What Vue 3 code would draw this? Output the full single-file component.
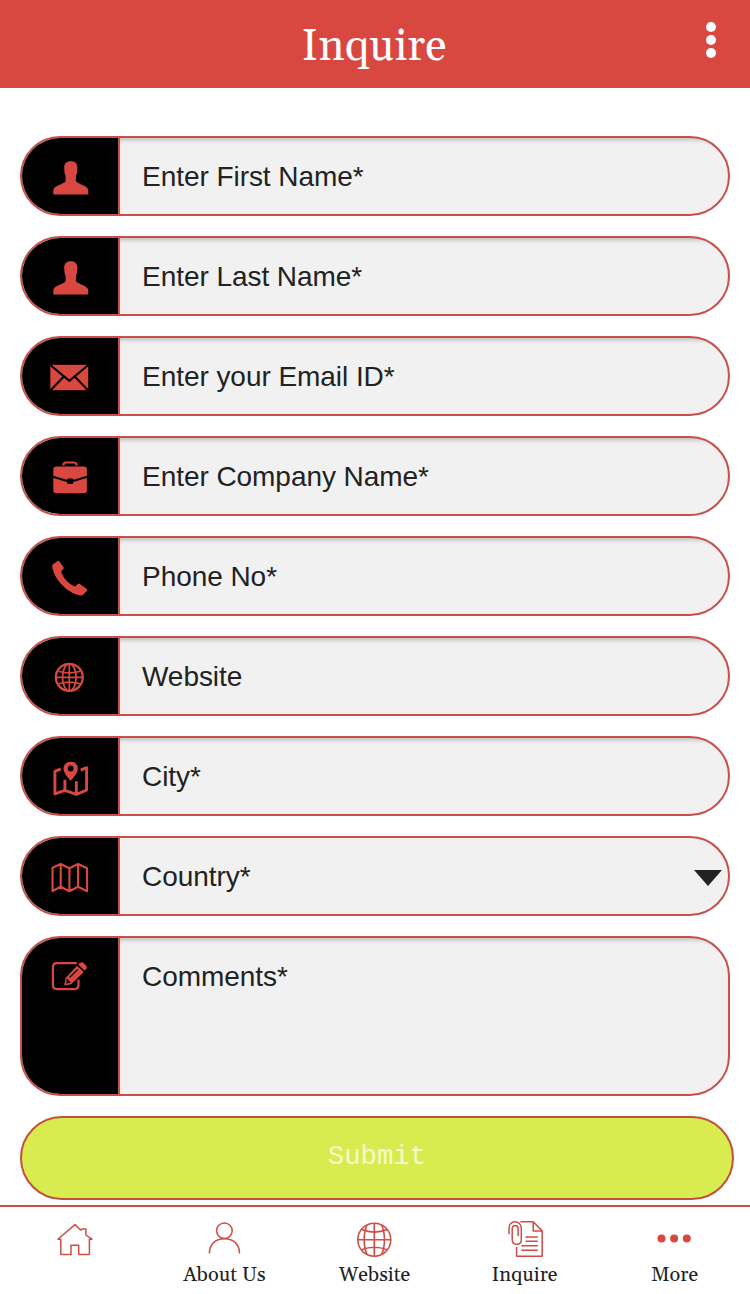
<script setup>
const fields = [
  { label: 'Enter First Name*', icon: 'user' },
  { label: 'Enter Last Name*', icon: 'user' },
  { label: 'Enter your Email ID*', icon: 'mail' },
  { label: 'Enter Company Name*', icon: 'case' },
  { label: 'Phone No*', icon: 'phone' },
  { label: 'Website', icon: 'globe' },
  { label: 'City*', icon: 'pin' },
  { label: 'Country*', icon: 'map', select: true },
  { label: 'Comments*', icon: 'edit', tall: true },
]
const tabs = [
  { label: '', icon: 'home' },
  { label: 'About Us', icon: 'about' },
  { label: 'Website', icon: 'web' },
  { label: 'Inquire', icon: 'doc' },
  { label: 'More', icon: 'more' },
]
</script>

<template>
  <div class="screen">
    <header class="bar">
      <h1>Inquire</h1>
      <div class="kebab"><i></i><i></i><i></i></div>
    </header>

    <main class="form">
      <div v-for="f in fields" :key="f.label" class="field" :class="{ tall: f.tall, select: f.select }">
        <div class="badge">
          <svg width="96" height="76" viewBox="22 2 96 76">
            <path v-if="f.icon === 'user'" class="solid" d="M70.7 25.3C75.3 25.3 77.4 28 77.4 31.5C77.4 36 76.6 38.6 75.9 40V45.2C76.8 46.6 80.4 48 83.7 49.4C87.1 50.9 88.3 52.4 88.3 55V58.6H53.3V55C53.3 52.4 54.5 50.9 57.9 49.4C61.4 48 64.9 46.6 65.6 45.2V40C64.9 38.6 64.2 36 64.2 31.5C64.2 28 66.1 25.3 70.7 25.3Z" />
            <g v-else-if="f.icon === 'mail'">
              <rect class="solid" x="50.3" y="28.8" width="37.9" height="25.4" />
              <path class="cut" stroke-width="2.1" d="M50.6 29.2L69.4 44.8L88 29.2M50.6 54.2L63.9 40.4M88 54.2L74.7 40.4" />
            </g>
            <g v-else-if="f.icon === 'case'">
              <path class="line" stroke-width="2.2" d="M63.5 29.6V28.5Q64 26.5 66.2 26.5H73.8Q76 26.5 76.5 28.5V29.6" />
              <rect class="solid" x="53.3" y="30.6" width="33.6" height="26.7" rx="3" />
              <path class="cut" stroke-width="2.1" d="M53 40.8L67 44.9H73L87.2 40.8" />
              <rect x="67.1" y="42.4" width="6" height="5.7" rx="1" />
            </g>
            <path v-else-if="f.icon === 'phone'" class="solid" d="M52.7 28.4L57.8 24.9Q58.7 24.4 59.3 25.3L63.7 31.4Q64.2 32.3 63.4 33.1L61.3 34.9C61.7 40.5 69.2 48.6 75.1 50.4L77.7 47.9Q78.6 47.2 79.6 47.8L86.8 53Q87.7 53.8 87 54.7L83.2 58.6C81.8 59.8 79.6 59.5 77.2 58.8C66.4 55.4 54.8 43.2 52.8 33.2C52.3 31 52 29.3 52.7 28.4Z" />
            <g v-else-if="f.icon === 'globe'" class="line" stroke-width="1.7">
              <circle cx="69.3" cy="41.3" r="13.5" stroke-width="2.3" />
              <ellipse cx="69.3" cy="41.3" rx="6.8" ry="13.5" />
              <path d="M69.3 27.8V54.8M55.8 41.3H82.8M58.5 35.2Q69.3 38.5 80.1 35.2M58.5 47.7Q69.3 44.4 80.1 47.7" />
            </g>
            <g v-else-if="f.icon === 'pin'">
              <path class="line" stroke-width="2.9" d="M60.8 32.8L54.9 35.4V57.9L64.9 54.4L76.3 58.3L86.6 54.1V31.7L80.7 34.2M64.9 43.8V54.4M76.3 45.2V58.3" />
              <path class="solid" fill-rule="evenodd" d="M70.7 25.7C75 25.7 77.9 28.8 77.9 32.5C77.9 36.8 73.7 41.1 70.7 45.1C67.7 41.1 63.5 36.8 63.5 32.5C63.5 28.8 66.4 25.7 70.7 25.7ZM70.7 29.6A2.9 2.9 0 1 0 70.7 35.4A2.9 2.9 0 1 0 70.7 29.6Z" />
            </g>
            <path v-else-if="f.icon === 'map'" class="line" stroke-width="2.1" d="M52.5 31.7L60.7 28L69.4 32.3L78.1 28L87.1 32.3V55.3L78.1 50.7L69.4 55.3L60.7 50.7L52.5 55ZM60.7 28V50.7M69.4 32.3V55.3M78.1 28V50.7" />
            <g v-else>
              <path class="line" stroke-width="2.2" d="M76.8 27.2H57Q52.9 27.2 52.9 31.3V49Q52.9 53.1 57 53.1H74.3Q78.5 53.1 78.5 49V43.5" />
              <path class="solid" d="M78.2 28.6L80.3 26.7Q82 25.6 83.6 27.1L86.2 29.7Q87.5 31.4 86.3 32.9L84.8 34.7ZM77 29.7L83.8 36L71.2 48.2L64.2 49.6L65.5 42Z" />
              <path class="cut" stroke-width="1.2" d="M69.5 41.5L77.8 33.4M67.1 43.8L69.7 46.3L66.9 46.8Z" />
            </g>
          </svg>
        </div>
        <div class="value">{{ f.label }}<span v-if="f.select" class="arrow"></span></div>
      </div>
      <button class="submit" type="button">Submit</button>
    </main>

    <nav class="tabs">
      <div v-for="t in tabs" :key="t.icon" class="tab">
        <svg width="150" height="54" viewBox="0 0 150 54">
          <path v-if="t.icon === 'home'" class="line" stroke-width="1.5" d="M60.8 31.9V47.5H71V38.3H78.7V47.5H89.4V31.9M60.8 32.2H57.9L75 17.6L80.5 23L82 22.1H85.9V28L91.9 32.2H89.2" />
          <g v-else-if="t.icon === 'about'" class="line" stroke-width="1.5">
            <circle cx="74.4" cy="23.8" r="7.8" />
            <path d="M59.4 46.5C59.4 37.2 65.5 31.7 74.5 31.7S89.5 37.2 89.5 46.5" />
          </g>
          <g v-else-if="t.icon === 'web'" class="line" stroke-width="1.6">
            <circle cx="74.3" cy="32.7" r="16.5" />
            <path d="M74.3 16.2V49.2M57.8 32.7H90.8M67 18C63.2 26.5 63.2 39 67 47.5M81.6 18C85.4 26.5 85.4 39 81.6 47.5M61.5 22.6Q74.3 27.7 87.1 22.6M61.5 42.8Q74.3 37.7 87.1 42.8" />
          </g>
          <g v-else-if="t.icon === 'doc'" class="line" stroke-width="1.5">
            <path d="M70.5 14.8H83.2L92.2 23.9V49.2H66.6V40M83.2 14.8V23.9H92.2M75.5 29.9H87.8M75.5 34.3H87.8M71.3 38.8H87.8M71.3 43.2H87.8" />
            <path d="M59 27.2V21C59 17.3 61.6 14.7 65 14.7S71.3 17.3 71.3 21V32.3C71.3 35.5 69.6 37.4 66.9 37.4S62.2 35.5 62.2 32.3V21.8C62.2 19.6 63.4 18.4 65.2 18.4S68.1 19.6 68.1 21.8V29" />
          </g>
          <g v-else class="solid">
            <circle cx="61.5" cy="31.5" r="4" /><circle cx="74.1" cy="31.5" r="4" /><circle cx="86.8" cy="31.5" r="4" />
          </g>
        </svg>
        <span>{{ t.label }}</span>
      </div>
    </nav>
  </div>
</template>

<style>
body { background: #fff; }
</style>

<style scoped>
* { box-sizing: border-box; }
.screen { width: 750px; height: 1294px; overflow: hidden; display: flex; flex-direction: column; background: #fff; }
.bar { height: 88px; flex: none; background: #d84840; position: relative; display: flex; justify-content: center; align-items: center; }
h1 { margin: 0; padding: 6px 2px 0 0; font: 400 44px/82px Gelasio, Georgia, "Liberation Serif", serif; color: #fff; }
.kebab { position: absolute; right: 34px; top: 22px; display: flex; flex-direction: column; gap: 3px; }
.kebab i { width: 10px; height: 10px; border-radius: 50%; background: #fff; }
.form { flex: none; height: 1117px; padding: 48px 16px 0 20px; display: flex; flex-direction: column; gap: 20px; }
.field { width: 710px; height: 80px; flex: none; display: flex; border: 2px solid #c75048; border-radius: 40px; overflow: hidden; background: #f1f1f1; }
.tall { height: 160px; }
.badge { width: 98px; flex: none; background: #000; border-right: 2px solid #c75048; }
svg { display: block; }
.solid { fill: #d84840; }
.line { fill: none; stroke: #cf4d46; stroke-linejoin: round; }
.badge .line { stroke: #d84840; }
.cut { fill: none; stroke: #000; }
.value { flex: 1; padding-left: 22px; font: 28px/78px "Liberation Sans", Arial, sans-serif; letter-spacing: -0.05px; color: #222; box-shadow: inset 0 4px 4px -2px rgba(0, 0, 0, 0.22); }
.select .value { display: flex; justify-content: space-between; align-items: flex-start; padding-right: 6px; box-shadow: none; }
.arrow { width: 28px; height: 16px; margin-top: 32px; background: #222; clip-path: polygon(0 0, 100% 0, 50% 100%); }
.submit { width: 714px; height: 84px; flex: none; border: 2px solid #c0513a; border-radius: 42px; background: #d8ec50; color: #f5fac8; font: 27.3px/76px "Liberation Mono", "Courier New", monospace; padding: 0 0 3px; }
.tabs { flex: none; height: 89px; border-top: 2px solid #c75048; display: grid; grid-template-columns: repeat(5, 150px); }
.tab { display: flex; flex-direction: column; align-items: center; }
.tab span { padding-top: 1px; margin-left: -1px; font: 20px/26px Gelasio, Georgia, "Liberation Serif", serif; color: #222; }
</style>
